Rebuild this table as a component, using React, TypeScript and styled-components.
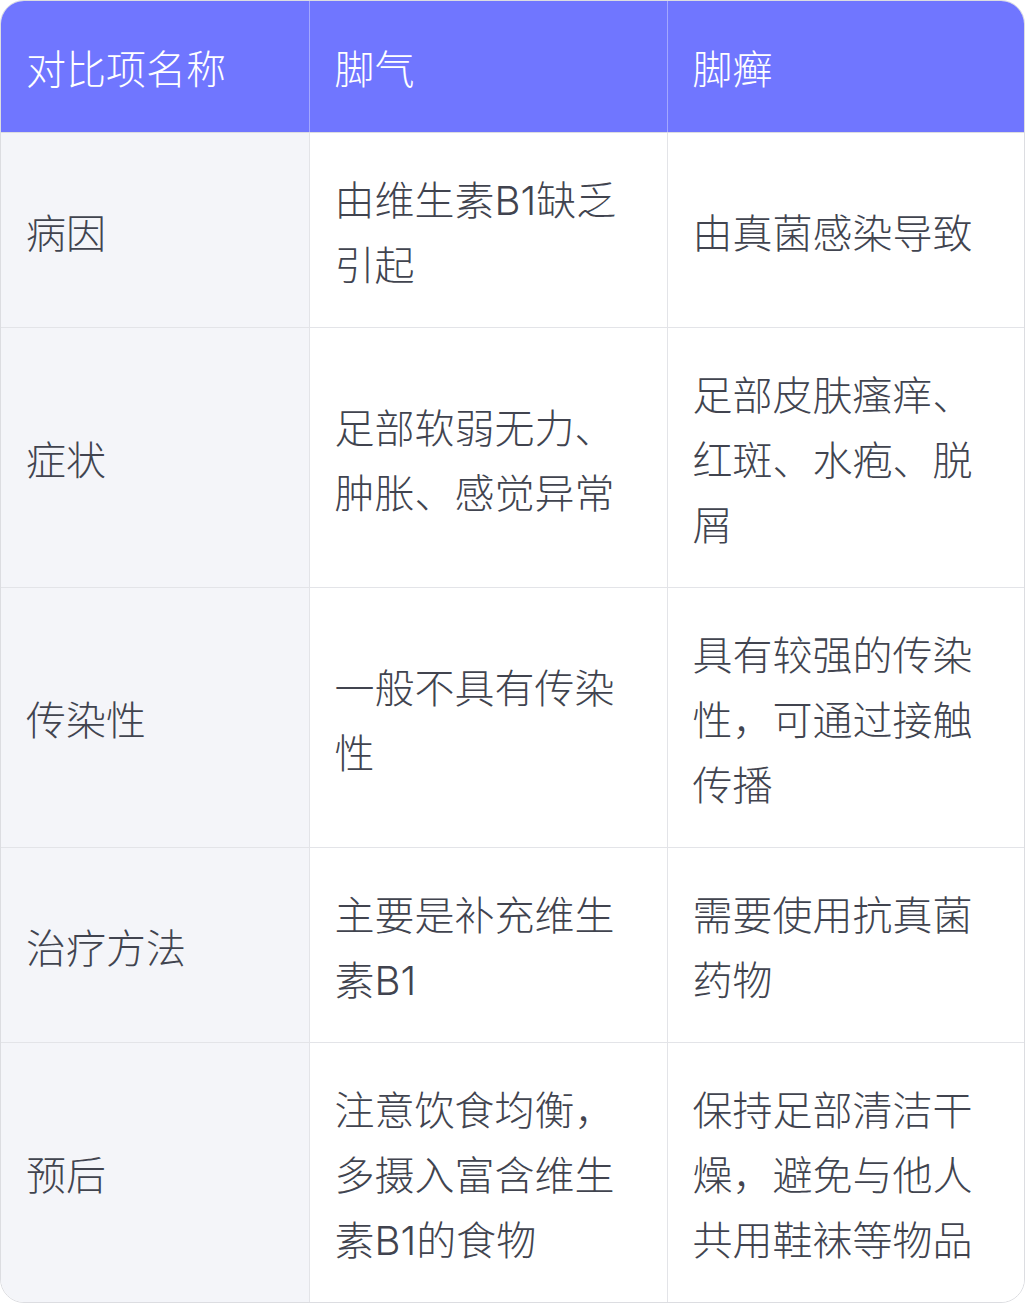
import React from 'react'
import styled, { createGlobalStyle } from 'styled-components'

const GlobalStyle = createGlobalStyle`
  html, body {
    margin: 0;
    padding: 0;
    background: #ffffff;
  }
  body {
    font-family: "Inter", "Noto Sans CJK SC", sans-serif;
  }
`

const rows = [
  { name: '病因', a: '由维生素B1缺乏引起', b: '由真菌感染导致' },
  { name: '症状', a: '足部软弱无力、肿胀、感觉异常', b: '足部皮肤瘙痒、红斑、水疱、脱屑' },
  { name: '传染性', a: '一般不具有传染性', b: '具有较强的传染性，可通过接触传播' },
  { name: '治疗方法', a: '主要是补充维生素B1', b: '需要使用抗真菌药物' },
  { name: '预后', a: '注意饮食均衡，多摄入富含维生素B1的食物', b: '保持足部清洁干燥，避免与他人共用鞋袜等物品' },
]

export default function App() {
  return (
    <>
      <GlobalStyle />
      <Frame>
        <Table>
          <colgroup>
            <col style={{ width: 308 }} />
            <col style={{ width: 358 }} />
            <col />
          </colgroup>
          <thead>
            <tr>
              <HeadCell>对比项名称</HeadCell>
              <HeadCell>脚气</HeadCell>
              <HeadCell>脚癣</HeadCell>
            </tr>
          </thead>
          <tbody>
            {rows.map((r) => (
              <tr key={r.name}>
                <Cell $label>{r.name}</Cell>
                <Cell>{r.a}</Cell>
                <Cell>{r.b}</Cell>
              </tr>
            ))}
          </tbody>
        </Table>
      </Frame>
    </>
  )
}

const Frame = styled.div`
  width: 1023px;
  border: 1px solid #dcdde1;
  border-radius: 24px;
  overflow: hidden;
`

const Table = styled.table`
  width: 100%;
  border-collapse: collapse;
  table-layout: fixed;
  font-size: 40px;
  line-height: 65px;
  font-weight: 300;
`

const HeadCell = styled.th`
  background: #7076ff;
  color: #ffffff;
  font-weight: 300;
  text-align: left;
  padding: 36px 25px 30px;
  border-left: 1px solid #a3a7ff;
  border-bottom: 1px solid #dcdde1;

  &:first-child {
    border-left: none;
  }
`

const Cell = styled.td<{ $label?: boolean }>`
  background: ${(p) => (p.$label ? '#f4f5f9' : '#ffffff')};
  color: #41444f;
  padding: 35px 25px 29px;
  vertical-align: middle;
  border-left: 1px solid #e3e4e8;
  border-top: 1px solid #e3e4e8;

  &:first-child {
    border-left: none;
  }

  tr:first-child > & {
    border-top: none;
  }
`
